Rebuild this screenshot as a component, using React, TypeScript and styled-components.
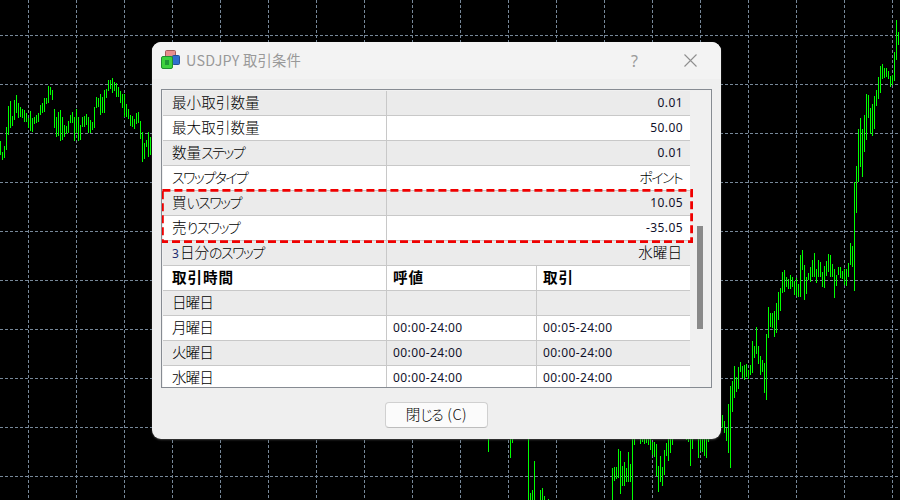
import React from 'react';
import styled, { createGlobalStyle } from 'styled-components';

type Bar = [number, number];

const uiFont = '"Noto Sans CJK JP", "Noto Sans", sans-serif';
const numberFont = '"Noto Sans", "Noto Sans CJK JP", sans-serif';

const VERTICAL_GRID = Array.from({ length: 19 }, (_, i) => 28 + i * 48);
const HORIZONTAL_GRID = Array.from({ length: 10 }, (_, i) => 35 + i * 49);

// each run is [first x, [[top, bottom], ...]], one bar every 2px
const RUNS: [number, Bar[]][] = [
  [0, [[141, 155], [152, 160], [146, 158], [127, 150], [106, 135], [101, 128], [116, 126], [100, 120], [95, 113], [103, 118], [107, 117], [109, 118], [110, 122], [113, 122], [118, 128], [111, 131], [118, 132], [117, 124], [115, 123], [113, 122], [105, 115], [103, 113], [98, 112], [98, 104], [86, 103], [87, 95], [90, 100], [109, 128], [117, 137], [112, 136], [110, 141], [117, 140], [125, 137], [126, 134], [121, 133], [115, 123], [112, 123], [117, 141], [109, 133], [117, 141], [125, 140], [117, 127], [116, 127], [114, 125], [117, 133], [120, 133], [122, 130], [107, 128], [97, 108], [98, 107], [94, 115], [97, 113], [90, 113], [89, 98], [80, 91], [80, 89], [78, 93], [82, 91], [83, 97], [87, 97], [91, 103], [94, 108], [94, 117], [104, 117], [109, 119], [115, 126], [116, 127], [119, 129], [113, 124], [112, 123], [121, 139], [132, 162], [143, 159], [140, 147], [132, 157], [137, 155]]],
  [488, [[439, 452]]],
  [510, [[439, 458], [439, 443]]],
  [528, [[439, 500], [493, 500], [490, 500], [461, 500]]],
  [540, [[490, 500], [488, 500], [496, 500]]],
  [548, [[499, 500]]],
  [612, [[468, 500], [467, 481], [467, 479], [449, 478], [451, 494], [466, 486], [462, 486], [468, 482], [452, 482], [464, 482], [439, 500], [439, 445]]],
  [640, [[439, 444], [439, 442], [439, 444], [439, 443], [439, 445], [439, 450], [442, 455], [442, 457], [444, 476], [466, 492], [456, 482], [467, 486], [450, 475], [443, 456], [439, 461], [439, 453], [439, 445]]],
  [686, [[439, 440], [439, 442], [439, 466], [439, 449]]],
  [698, [[439, 458], [439, 451], [439, 452], [439, 456], [439, 458], [439, 442]]],
  [722, [[415, 428], [421, 433], [428, 441], [404, 453], [386, 468], [381, 412], [366, 398], [377, 392], [367, 389], [362, 372], [366, 378], [365, 380], [364, 377], [370, 379], [365, 375], [341, 373], [346, 358], [327, 354], [346, 364], [356, 375], [360, 372], [363, 393], [334, 400], [307, 338], [313, 327], [313, 328], [311, 337], [303, 333], [292, 320], [288, 311], [272, 293], [270, 292], [277, 287], [279, 289], [275, 289], [277, 287], [281, 295], [278, 296], [284, 297], [255, 297], [250, 270], [265, 300], [277, 294], [273, 280], [267, 282], [260, 277], [253, 277], [269, 283], [260, 277], [262, 277], [272, 287], [266, 288], [261, 276], [254, 272], [255, 277], [264, 277], [269, 298], [275, 286], [267, 275], [267, 278], [271, 279], [269, 285], [269, 286], [263, 277], [243, 265], [246, 267], [182, 291], [166, 213], [129, 182], [118, 167], [129, 177], [115, 152], [94, 140], [95, 118], [108, 134], [104, 136], [96, 129], [90, 106], [77, 99], [66, 93], [64, 79], [68, 78], [68, 77], [71, 79], [76, 87], [75, 85], [52, 81], [20, 60], [32, 45]]],
];

type RowData = { label: string; value: string; cjkValue?: boolean };

const TOP_ROWS: RowData[] = [
  { label: '最小取引数量', value: '0.01' },
  { label: '最大取引数量', value: '50.00' },
  { label: '数量ステップ', value: '0.01' },
  { label: 'スワップタイプ', value: 'ポイント', cjkValue: true },
];

const SWAP_ROWS: RowData[] = [
  { label: '買いスワップ', value: '10.05' },
  { label: '売りスワップ', value: '-35.05' },
];

const SESSIONS = [
  { day: '日曜日', quote: '', trade: '' },
  { day: '月曜日', quote: '00:00-24:00', trade: '00:05-24:00' },
  { day: '火曜日', quote: '00:00-24:00', trade: '00:00-24:00' },
  { day: '水曜日', quote: '00:00-24:00', trade: '00:00-24:00' },
];

// the reference font sets kana tighter than kanji, digits in a latin face
const styledRuns = (text: string) =>
  text.split(/([\u3040-\u30ff]+|\d+)/).map((part, i) => {
    if (i % 2 === 0) return part;
    return /\d/.test(part) ? <Digit key={i}>{part}</Digit> : <Kana key={i}>{part}</Kana>;
  });

const App = () => (
  <Desktop>
    <GlobalStyle />
    <Chart width={900} height={500} viewBox="0 0 900 500">
      {VERTICAL_GRID.map((x) => (
        <GridLine key={`v${x}`} x1={x + 0.5} x2={x + 0.5} y1={0} y2={500} />
      ))}
      {HORIZONTAL_GRID.map((y) => (
        <GridLine key={`h${y}`} x1={0} x2={900} y1={y + 0.5} y2={y + 0.5} />
      ))}
      {RUNS.map(([start, bars]) =>
        bars.map(([top, bottom], i) => (
          <rect key={`${start}-${i}`} x={start + i * 2} y={top} width={1} height={bottom - top} fill="#00ff00" />
        )),
      )}
    </Chart>
    <Dialog>
      <TitleBar>
        <AppIcon />
        <Title>USDJPY 取引条件</Title>
        <HelpButton>?</HelpButton>
        <CloseIcon width={13} height={13} viewBox="0 0 13 13">
          <path d="M0.5 0.5 L12.5 12.5 M12.5 0.5 L0.5 12.5" stroke="#8f8f8f" strokeWidth={1.1} fill="none" />
        </CloseIcon>
      </TitleBar>
      <Body>
        <ListBox>
          <Rows>
            {TOP_ROWS.map((row, i) => (
              <PropertyRow key={row.label} row={row} shaded={i % 2 === 0} />
            ))}
            <Highlight>
              {SWAP_ROWS.map((row, i) => (
                <PropertyRow key={row.label} row={row} shaded={i % 2 === 0} />
              ))}
              <DashedFrame width={532} height={54} viewBox="0 0 532 54">
                <rect x={1.4} y={1.4} width={529.2} height={51.2} fill="none" stroke="#f00000" strokeWidth={2.8} strokeDasharray="8 4" />
              </DashedFrame>
            </Highlight>
            <PropertyRow row={{ label: '3日分のスワップ', value: '水曜日', cjkValue: true }} shaded />
            <Row>
              <Cell>
                <Strong>取引時間</Strong>
              </Cell>
              <Cell>
                <Strong>呼値</Strong>
              </Cell>
              <Cell>
                <Strong>取引</Strong>
              </Cell>
            </Row>
            {SESSIONS.map((session, i) => (
              <Row key={session.day} $shaded={i % 2 === 0}>
                <Cell>
                  <DayLabel>{session.day}</DayLabel>
                </Cell>
                <Cell>
                  <NumberText>{session.quote}</NumberText>
                </Cell>
                <Cell>
                  <NumberText>{session.trade}</NumberText>
                </Cell>
              </Row>
            ))}
          </Rows>
          <ScrollTrack>
            <ScrollThumb />
          </ScrollTrack>
        </ListBox>
        <Footer>
          <CloseButton>{styledRuns('閉じる')} <ButtonKey>(C)</ButtonKey></CloseButton>
        </Footer>
      </Body>
    </Dialog>
  </Desktop>
);

export default App;

const PropertyRow = ({ row, shaded }: { row: RowData; shaded: boolean }) => (
  <PairRow $shaded={shaded}>
    <Cell>
      <Label>{styledRuns(row.label)}</Label>
    </Cell>
    <ValueCell>
      {row.cjkValue ? <CjkValue>{styledRuns(row.value)}</CjkValue> : <NumberText>{row.value}</NumberText>}
    </ValueCell>
  </PairRow>
);

const AppIcon = () => (
  <IconBox width={20} height={20} viewBox="0 0 20 20">
    <rect x={4.5} y={0.5} width={10} height={9} rx={1} fill="#e88e8e" stroke="#a35a5a" />
    <rect x={11.5} y={5.5} width={7} height={9} rx={1} fill="#2f6fd0" stroke="#234f96" />
    <rect x={0.5} y={6.5} width={11} height={12} rx={1.5} fill="#3fd23f" stroke="#1f8f2f" />
    <rect x={4} y={10} width={4} height={5} fill="#1f9a35" />
  </IconBox>
);

const GlobalStyle = createGlobalStyle`
  html, body {
    margin: 0;
    padding: 0;
    background: #000;
  }
`;

const Desktop = styled.div`
  position: relative;
  width: 900px;
  height: 500px;
  overflow: hidden;
  background: #000;
  font-family: ${uiFont};
`;

const Chart = styled.svg`
  position: absolute;
  inset: 0;
  display: block;
`;

const GridLine = styled.line`
  stroke: #778899;
  stroke-width: 1;
  stroke-dasharray: 3 2;
`;

const Dialog = styled.div`
  position: absolute;
  left: 152px;
  top: 42px;
  width: 569px;
  height: 397px;
  display: flex;
  flex-direction: column;
  border-radius: 9px;
  overflow: hidden;
  background: #efefef;
  box-shadow: 0 1px 2px rgba(90, 90, 90, 0.7);
`;

const TitleBar = styled.div`
  height: 37px;
  flex: none;
  display: flex;
  align-items: center;
  padding: 0 24px 0 9px;
  background: #f3f3f3;
`;

const IconBox = styled.svg`
  flex: none;
  display: block;
  margin-top: -2px;
`;

const Title = styled.span`
  margin-left: 5px;
  margin-top: -2px;
  flex: 1;
  font-size: 14.3px;
  font-feature-settings: 'palt';
  letter-spacing: 0.25px;
  color: #999;
`;

const HelpButton = styled.span`
  margin-right: 46px;
  font-family: ${numberFont};
  font-size: 16px;
  color: #9a9a9a;
`;

const CloseIcon = styled.svg`
  display: block;
  flex: none;
`;

const Body = styled.div`
  flex: 1;
  display: flex;
  flex-direction: column;
  padding: 10px 9px 0;
`;

const ListBox = styled.div`
  height: 299px;
  flex: none;
  display: flex;
  box-sizing: border-box;
  padding: 1px 0 0 1px;
  border: 1px solid #868b92;
  overflow: hidden;
  background: #f0f0f0;
`;

const Rows = styled.div`
  width: 527px;
  flex: none;
  display: flex;
  flex-direction: column;
`;

const Row = styled.div<{ $shaded?: boolean }>`
  height: 25px;
  flex: none;
  box-sizing: border-box;
  display: grid;
  grid-template-columns: 224px 150px 1fr;
  border-bottom: 1px solid #c8c8c8;
  background: ${({ $shaded }) => ($shaded ? '#ebebeb' : '#fff')};
`;

const PairRow = styled(Row)`
  grid-template-columns: 224px 1fr;
`;

const Cell = styled.div`
  display: flex;
  align-items: center;
  box-sizing: border-box;
  padding-left: 6px;
  color: #000;
  &:first-child {
    padding-left: 9px;
  }
  &:not(:last-child) {
    border-right: 1px solid #c8c8c8;
  }
`;

const ValueCell = styled(Cell)`
  justify-content: flex-end;
  padding-right: 7px;
`;

const Label = styled.span`
  margin-top: -3px;
  font-size: 14.6px;
  font-weight: 300;
  font-feature-settings: 'palt';
  white-space: nowrap;
`;

const CjkValue = styled(Label)`
  margin-right: 1px;
`;

const Kana = styled.span`
  font-size: 14px;
  letter-spacing: -1.6px;
`;

const Digit = styled.span`
  font-family: ${numberFont};
  font-size: 12px;
  font-weight: 400;
  margin-right: 1px;
  color: #1c2c70;
`;

const DayLabel = styled(Label)`
  letter-spacing: -1px;
`;

const Strong = styled(Label)`
  font-weight: 700;
  letter-spacing: 0.9px;
`;

const NumberText = styled.span`
  margin-top: -1px;
  font-family: ${numberFont};
  font-size: 12px;
  letter-spacing: 0.4px;
  color: #10102a;
`;

const Highlight = styled.div`
  position: relative;
  flex: none;
`;

const DashedFrame = styled.svg`
  position: absolute;
  left: -2px;
  top: -2px;
  display: block;
  pointer-events: none;
`;

const ScrollTrack = styled.div`
  flex: 1;
  position: relative;
`;

const ScrollThumb = styled.div`
  position: absolute;
  left: 7px;
  top: 135px;
  width: 6px;
  height: 103px;
  background: #8a8a8a;
`;

const Footer = styled.div`
  flex: 1;
  display: flex;
  justify-content: center;
  padding-top: 14px;
`;

const CloseButton = styled.button`
  width: 103px;
  height: 26px;
  padding: 0 0 3px;
  box-sizing: border-box;
  border: 1px solid #d0d0d0;
  border-bottom-color: #bdbdbd;
  border-radius: 4px;
  background: #fbfbfb;
  font-family: ${uiFont};
  font-size: 14.6px;
  font-weight: 300;
  font-feature-settings: 'palt';
  color: #000;
`;

const ButtonKey = styled.span`
  margin-left: 2px;
  letter-spacing: 0.5px;
`;
